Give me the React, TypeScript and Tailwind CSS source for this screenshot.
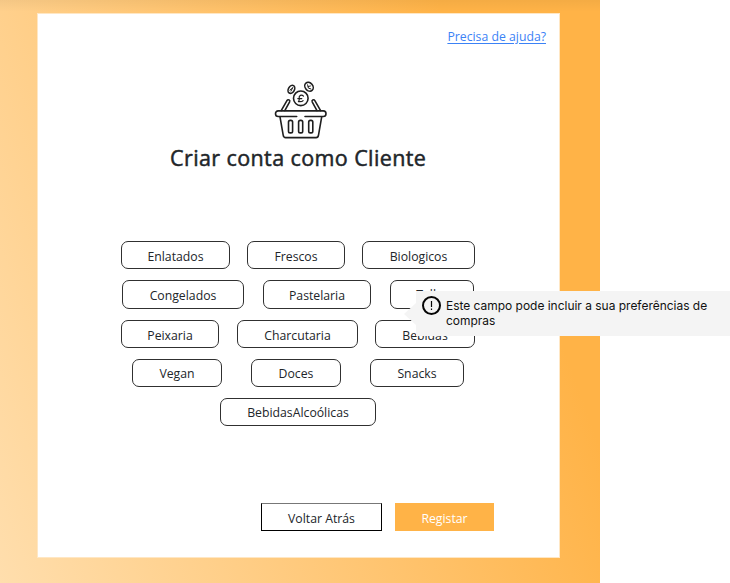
type Item = { label: string; box: string };
type Row = { row: string; items: Item[] };

const rows: Row[] = [
  {
    row: "ml-[83px] h-[28px]",
    items: [
      { label: "Enlatados", box: "w-[109px] pt-[4px]" },
      { label: "Frescos", box: "ml-[17px] w-[98px] pt-[4px]" },
      { label: "Biologicos", box: "ml-[17px] w-[113px] pt-[4px]" },
    ],
  },
  {
    row: "ml-[84px] mt-[11px] h-[29px]",
    items: [
      { label: "Congelados", box: "w-[122px] pt-[3px]" },
      { label: "Pastelaria", box: "ml-[19px] w-[108px] pt-[3px]" },
      { label: "Talho", box: "ml-[19px] w-[84px] pt-[1px]" },
    ],
  },
  {
    row: "ml-[83px] mt-[11px] h-[28px]",
    items: [
      { label: "Peixaria", box: "w-[98px] pt-[4px]" },
      { label: "Charcutaria", box: "ml-[18px] w-[121px] pt-[4px]" },
      { label: "Bebidas", box: "ml-[17px] w-[100px] pt-[4px]" },
    ],
  },
  {
    row: "ml-[94px] mt-[11px] h-[28px]",
    items: [
      { label: "Vegan", box: "w-[90px] pt-[2px]" },
      { label: "Doces", box: "ml-[29px] w-[90px] pt-[2px]" },
      { label: "Snacks", box: "ml-[29px] w-[94px] pt-[2px]" },
    ],
  },
  {
    row: "ml-[182px] mt-[11px] h-[28px]",
    items: [{ label: "BebidasAlcoólicas", box: "w-[156px] pt-[2px]" }],
  },
];

function Basket() {
  return (
    <svg
      className="ml-[236px] mt-[32px] block h-[60px] w-[54px]"
      viewBox="0 0 54 60"
      fill="none"
      stroke="#1f1f1f"
      strokeWidth="1.6"
      strokeLinecap="round"
      strokeLinejoin="round"
    >
      <ellipse cx="17.4" cy="10.3" rx="3" ry="4.3" transform="rotate(30 17.4 10.3)" />
      <path d="M15.9 11.1l3-2.3M17 12.1l1.6-3.4" strokeWidth="1" />
      <ellipse cx="35" cy="7.7" rx="3.8" ry="4.8" transform="rotate(-40 35 7.7)" />
      <path d="M33.6 5.8l.8 3.3 2.4.8M34.2 7.5l2.2-.5" strokeWidth="1" />
      <circle cx="26.8" cy="19.3" r="7.3" />
      <path d="M29.5 17.1c-2.1-2.2-4.8-.5-4.3 2.1.3 1.5.2 2.6-.8 3.5M23.8 19.6h4M24.4 22.6c2 .1 3.6.4 4.7-1" strokeWidth="1.2" />
      <path d="M7.2 31.6l5.6-9.8c1.4-2.1 3.7-.7 2.7 1.3l-4.7 8.5M46.6 31.6L41 21.8c-1.3-2.1-3.7-.7-2.7 1.3l4.7 8.5" />
      <path d="M22.7 37.5H4.2c-3.6 0-3.6-5.6 0-5.6H49.3c3.6 0 3.6 5.6 0 5.6H31" />
      <path d="M6 37.8l3.2 18.3c.3 1.9 1 2.5 2.4 2.5h30.5c1.4 0 2.1-.6 2.4-2.5L47.7 37.8" />
      <rect x="14.5" y="41.4" width="4.1" height="12.5" rx="1.7" />
      <rect x="24.6" y="41.4" width="4.1" height="12.5" rx="1.7" />
      <rect x="34.7" y="41.4" width="4.1" height="12.5" rx="1.7" />
    </svg>
  );
}

export default function App() {
  return (
    <div className="relative h-[583px] w-[730px] overflow-hidden bg-white font-['Open_Sans','Noto_Sans',sans-serif] text-[12.25px] text-[#212529]">
      <div className="h-[583px] w-[600px] bg-[linear-gradient(180deg,rgba(0,0,0,0.045),transparent_12px),linear-gradient(70deg,#ffdead_0%,#ffb347_80%,#ffb347_100%)] pl-[37px] pt-[13px]">
        <main className="flex h-[545px] w-[523px] flex-col border border-[#ffe7c4] bg-white">
          <a className="mr-[13px] mt-[13px] h-[20px] self-end whitespace-nowrap text-[#3b82f6] leading-[20px] underline underline-offset-2">
            Precisa de ajuda?
          </a>
          <Basket />
          <h1 className="ml-[132px] mt-[4px] h-[30px] whitespace-nowrap text-[21.5px] leading-[30px] font-normal tracking-[0.4px] [-webkit-text-stroke:0.5px_#212529]">
            Criar conta como Cliente
          </h1>
          <div className="mt-[68px]">
            {rows.map((r) => (
              <div key={r.items[0].label} className={`flex ${r.row}`}>
                {r.items.map((it) => (
                  <button
                    key={it.label}
                    className={`flex items-center justify-center rounded-[7px] border border-[#303030] bg-white ${it.box}`}
                  >
                    {it.label}
                  </button>
                ))}
              </div>
            ))}
          </div>
          <div className="ml-[223px] mt-[77px] flex h-[28px] gap-[13px]">
            <button className="w-[121px] border border-black border-t-[#777] pt-[4px]">Voltar Atrás</button>
            <button className="w-[99px] bg-[#ffb347] pt-[4px] text-white">Registar</button>
          </div>
        </main>
      </div>
      <aside className="absolute left-[416px] top-[291px] flex h-[45px] w-[314px] bg-[#f4f4f4] pl-[6px] pt-[5px] font-['Inter',sans-serif] text-[11.96px] leading-[15px] text-[#111]">
        <svg className="absolute left-[-12px] top-[12px] h-[22px] w-[12px]" viewBox="0 0 12 22">
          <path d="M12 0v22L0 11z" fill="#f4f4f4" />
        </svg>
        <svg className="h-[20px] w-[20px] shrink-0" viewBox="0 0 20 20" fill="none" stroke="#050505">
          <circle cx="9.5" cy="9.5" r="8.5" strokeWidth="2" />
          <path d="M9.5 5v6M9.5 12.5v1.5" strokeWidth="1.2" />
        </svg>
        <p className="ml-[4px] mt-[2px] whitespace-nowrap">
          Este campo pode incluir a sua preferências de
          <br />
          compras
        </p>
      </aside>
    </div>
  );
}
